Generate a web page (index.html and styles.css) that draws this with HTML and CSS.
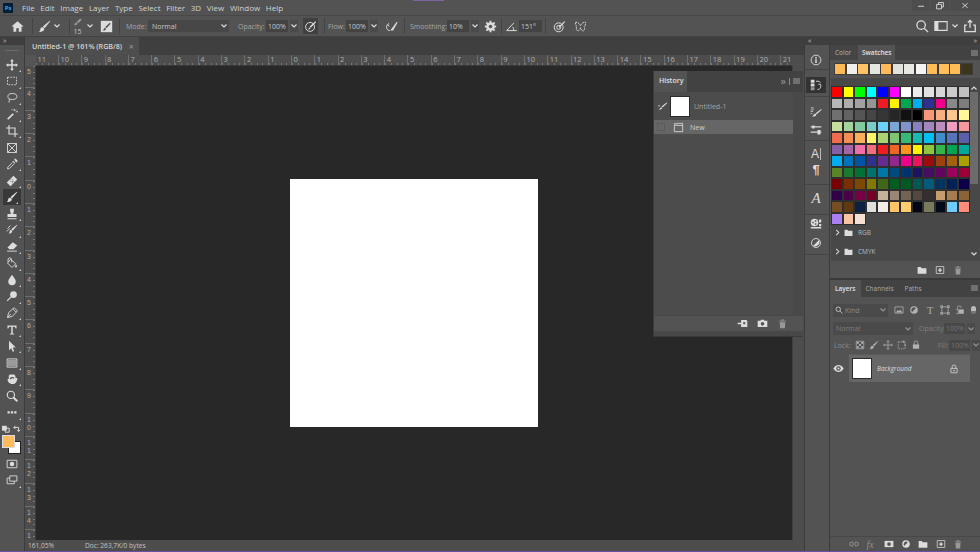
FILE: index.html
```html
<!DOCTYPE html>
<html lang="en">
<head>
  <meta charset="UTF-8" />
  <title>Untitled-1 @ 161% (RGB/8)</title>
  <link rel="stylesheet" href="styles.css">
</head>
<body>

  <!-- shared icons -->
  <svg class="defs" aria-hidden="true">
    <symbol id="i-brush" viewBox="0 0 16 16"><path class="f" d="M14.5 1 15 1.6 8.2 10 6 8ZM5.3 9c1.500 0 2.700 1.200 2.400 2.600C7.300 13.800 4 14.800 1 14.600 2.800 13.600 2.600 12 3 10.800 3.300 9.700 4.200 9 5.300 9Z"/></symbol>
    <symbol id="i-chev" viewBox="0 0 8 8"><path class="s" d="M1.500 2.500 4 5l2.500-2.500"/></symbol>
    <symbol id="i-folder" viewBox="0 0 16 16"><path class="f" d="M1 3h5l1.500 2H15v9H1Z"/></symbol>
    <symbol id="i-new" viewBox="0 0 16 16"><path class="s" d="M2 2.500h12v11H2Z"/><path class="f" d="M7 5h2v2h2v2H9v2H7V9H5V7h2Z"/></symbol>
    <symbol id="i-trash" viewBox="0 0 16 16"><path class="f" d="M3 4h10v1H3ZM6 2h4v1.500H6ZM4 6h8l-.5 9h-7Z"/></symbol>
    <symbol id="i-lock" viewBox="0 0 16 16"><path class="s" d="M5 7V4.500a3 3 0 0 1 6 0V7"/><path class="f" d="M3 7h10v7H3Z"/></symbol>
  </svg>

  <!-- Menu -->
  <header class="menubar">
    <span class="ps-logo">Ps</span>
    <nav class="menu">
      <span>File</span><span>Edit</span><span>Image</span><span>Layer</span><span>Type</span><span>Select</span><span>Filter</span><span>3D</span><span>View</span><span>Window</span><span>Help</span>
    </nav>
    <span class="title-mark"></span>
    <div class="winbtns">
      <svg viewBox="0 0 12 12"><path class="s" d="M2 7h8"/></svg>
      <svg viewBox="0 0 12 12"><path class="s" d="M1.500 4.500h6.500v6H1.500ZM4 4.500V2h6.500v6H8"/></svg>
      <svg viewBox="0 0 12 12"><path class="s" d="M2.500 3l7 6M9.500 3l-7 6"/></svg>
    </div>
  </header>

  <!-- Options -->
  <div class="optbar">
    <svg class="oi home" viewBox="0 0 16 16"><path class="f" d="M8 1.500 15.500 8H13v6.500H9.500V10h-3v4.500H3V8H.5Z"/></svg>
    <i class="sep"></i>
    <svg class="oi brush"><use href="#i-brush"/></svg>
    <svg class="chev"><use href="#i-chev"/></svg>
    <i class="sep sep-b"></i>
    <div class="size">
      <svg viewBox="0 0 16 16"><path class="f dim" d="M12 2l2 2-5 5-2-2ZM6 8c1 0 2 1 1.600 2.200C7 11.800 4.500 12.400 3 12c1-1 .8-3.800 3-4Z"/></svg>
      <span>15</span>
    </div>
    <svg class="chev chev-b"><use href="#i-chev"/></svg>
    <svg class="oi toggle" viewBox="0 0 16 16"><path class="f" d="M1 1h14v14H1Z"/><path class="b" d="M12 3.500 13 4.500 8 10 6.500 8.500ZM6 9.500 7.500 11C7 12.500 5 13 3.500 12.800 4.800 12 4.500 10 6 9.500Z"/></svg>
    <i class="sep sep-c"></i>
    <label class="lbl mode-lbl">Mode:</label>
    <div class="field mode"><span>Normal</span><svg class="chev"><use href="#i-chev"/></svg></div>
    <label class="lbl op-lbl">Opacity:</label>
    <div class="field num op"><span>100%</span></div>
    <div class="field drop"><svg class="chev"><use href="#i-chev"/></svg></div>
    <div class="pressed">
      <svg class="oi" viewBox="0 0 16 16"><circle class="s" cx="7.500" cy="8.500" r="5.500"/><path class="f" d="M14 1.500 15 2.500 8.500 9.500 7 8ZM6.500 9 8 10.500C7.500 11.500 6 11.800 5 11.500 6 11 5.800 9.600 6.500 9Z"/></svg>
    </div>
    <i class="sep sep-d"></i>
    <label class="lbl flow-lbl">Flow:</label>
    <div class="field num flow"><span>100%</span></div>
    <div class="field drop"><svg class="chev"><use href="#i-chev"/></svg></div>
    <svg class="oi air" viewBox="0 0 16 16"><path class="s" d="M5 4.500C3 5 1.500 7 2 9.500 2.300 11.500 4 13 6 13M3.500 6 5 8"/><path class="f" d="M14.500 2 15.500 3 10 13H6.500Z"/></svg>
    <i class="sep sep-e"></i>
    <label class="lbl smooth-lbl">Smoothing:</label>
    <div class="field num smooth"><span>10%</span></div>
    <div class="field drop"><svg class="chev"><use href="#i-chev"/></svg></div>
    <svg class="oi gear" viewBox="0 0 16 16"><path class="f" d="M7 1h2l.4 2 1.300.5L12.400 2.400 13.800 3.800 12.500 5.400 13 6.700 15 7v2l-2 .4-.5 1.300 1.300 1.700-1.400 1.400-1.700-1.300-1.300.5L9 15H7l-.4-2-1.300-.5-1.700 1.300-1.400-1.400 1.300-1.700L3 9.400 1 9V7l2-.3.5-1.300L2.200 3.800 3.600 2.400l1.700 1.100L6.600 3Z"/><circle class="b" cx="8" cy="8" r="2.200"/></svg>
    <i class="sep sep-f"></i>
    <svg class="oi angle" viewBox="0 0 16 16"><path class="s" d="M14.500 13H2L11 3.500M9.500 8.500c1 1.200 1.300 2.900 1.300 4.500"/></svg>
    <div class="field num ang"><span>151°</span></div>
    <i class="sep sep-g"></i>
    <svg class="oi target" viewBox="0 0 16 16"><circle class="s" cx="7" cy="9" r="5.500"/><circle class="s" cx="7" cy="9" r="2.500"/><path class="f" d="M14 1.500 15 2.500 8 9.500 6.800 8.200Z"/></svg>
    <svg class="oi fly" viewBox="0 0 16 16"><path class="s dash" d="M2 2.500c2.500 0 5 2 6 4.500 1-2.500 3.500-4.500 6-4.500 .5 2.500 0 5-1.500 5.500 1 1 1 4-1 5.500-1.500 0-3-1.500-3.500-4-.5 2.500-2 4-3.500 4-2-1.500-2-4.500-1-5.500C2.500 7.500 1.500 5 2 2.500Z"/></svg>
    <div class="opt-right">
      <svg class="oi" viewBox="0 0 16 16"><circle class="s th" cx="7" cy="7" r="4.800"/><path class="s th" d="M10.500 10.500 15 15"/></svg>
      <svg class="oi" viewBox="0 0 16 16"><path class="s" d="M1 3h14v10H1Z"/><path class="f" d="M1 3h4v10H1Z"/></svg>
      <svg class="chev"><use href="#i-chev"/></svg>
      <svg class="oi" viewBox="0 0 16 16"><path class="s th" d="M4.500 7H2v7.500h12V7h-2.500M8 10V1.500M5.500 4 8 1.500 10.500 4"/></svg>
    </div>
  </div>

  <main class="workspace">

    <!-- Tools -->
    <aside class="toolbar">
      <div class="strip"><span class="arrows">»</span></div>
      <div class="grip"></div>
      <div class="tool c"><svg viewBox="0 0 16 16"><path class="f" d="M8 0l2.500 3H9v4h4V5.500L16 8l-3 2.500V9H9v4h1.500L8 16l-2.500-3H7V9H3v1.500L0 8l3-2.500V7h4V3H5.500Z"/></svg></div>
      <div class="tool c"><svg viewBox="0 0 16 16"><path class="s dash2" d="M2 3h12v10H2Z"/></svg></div>
      <div class="tool c"><svg viewBox="0 0 16 16"><ellipse class="s" cx="8.500" cy="6" rx="6" ry="4"/><path class="s" d="M4.500 9.500C4 11 4.500 12 4 14"/></svg></div>
      <div class="tool c"><svg viewBox="0 0 16 16"><path class="f" d="M9 7l1.500 1.500L3 15.500 1.500 14Z"/><path class="s" d="M11 1v3M13 5h3M9 3 7.500 1.500M13.500 2l-1.500 1.500"/></svg></div>
      <div class="tool c"><svg viewBox="0 0 16 16"><path class="s th" d="M4 0v12h12M0 4h12v12"/></svg></div>
      <div class="tool"><svg viewBox="0 0 16 16"><path class="s" d="M2 2h12v12H2ZM2 2l12 12M14 2 2 14"/></svg></div>
      <div class="tool c"><svg viewBox="0 0 16 16"><path class="f" d="M11 1c1-1 3 1 4 2s0 2-1 3l-2-2ZM9.500 3.500l3 3-1 1-3-3Z"/><path class="s" d="M8.500 6 2.500 12 2 14.500 4.500 14l6-6"/></svg></div>
      <div class="tool c"><svg viewBox="0 0 16 16"><path class="f" d="M10 1 15 6 6 15 1 10Z"/><path class="b" d="M6 6h1v1H6ZM8 6h1v1H8ZM6 8h1v1H6ZM8 8h1v1H8ZM10 8h1v1h-1ZM8 10h1v1H8Z"/></svg></div>
      <div class="tool c active"><svg><use href="#i-brush"/></svg></div>
      <div class="tool c"><svg viewBox="0 0 16 16"><path class="f" d="M5.500 1h5v2.500L9.500 8H14v4H2V8h4.500L5.500 3.500ZM2 13.500h12V15H2Z"/></svg></div>
      <div class="tool c"><svg viewBox="0 0 16 16"><path class="f" d="M14.500 1 15 1.600 9 9 7 7ZM6 8c1.500 0 2.500 1 2.200 2.400C7.800 12 5.500 13 3.500 13 5 12 4.700 8.400 6 8Z"/><path class="s" d="M2 6 6 2M1 10l4-4"/></svg></div>
      <div class="tool c"><svg viewBox="0 0 16 16"><path class="f" d="M9 1.500 15 6 10 11H4.500L2 8.500Z"/><path class="s" d="M1.500 13.500h13"/></svg></div>
      <div class="tool c"><svg viewBox="0 0 16 16"><path class="s" d="M6 3 13 9 8 14 2 8ZM3 7C2 3 3 1 5 1c2 0 2.500 2 2.500 6"/><path class="f" d="M13.500 10c1 1.500 1.500 2.400 1 3.400-.6.800-2 .8-2.400-.2-.2-1 .8-2.100 1.400-3.200Z"/></svg></div>
      <div class="tool c"><svg viewBox="0 0 16 16"><path class="f" d="M8 1c2 3 5 6 5 9a5 5 0 0 1-10 0c0-3 3-6 5-9Z"/></svg></div>
      <div class="tool c"><svg viewBox="0 0 16 16"><circle class="f" cx="10" cy="6" r="4.500"/><path class="s th" d="M7 9 1.500 14.500"/></svg></div>
      <div class="tool c"><svg viewBox="0 0 16 16"><path class="s" d="M2 14 3.500 7.500 9 2.500 13.500 7 8.500 12.500ZM2 14 6.500 9.500M9 2.500 11 1l4 4-1.500 2"/></svg></div>
      <div class="tool c"><svg viewBox="0 0 16 16"><path class="f" d="M2 2h12v4h-1.200C12.500 4.200 12 3.500 10 3.500H9V12.500l2 .5V14H5v-1l2-.5V3.500H6C4 3.500 3.500 4.200 3.200 6H2Z"/></svg></div>
      <div class="tool c"><svg viewBox="0 0 16 16"><path class="f" d="M4 1 13 10 9 10 11 15 9 15.500 7 11 4 13.500Z"/></svg></div>
      <div class="tool c"><svg viewBox="0 0 16 16"><path class="s" d="M1.500 2.500h13v11h-13Z"/><path class="f dim" d="M2.500 3.500h11v9h-11Z"/></svg></div>
      <div class="tool c"><svg viewBox="0 0 16 16"><path class="f" d="M4 7C3 4 4 2 6 2h4c2 0 3 2 2.500 4L15 7c.5 2-1 6-4 7.500H7C4 14 2 11 2 9Z"/><path class="b" d="M5 7.500c1.500-2.500 5-2.500 6.500-1l-1 1c-1-.8-3-.8-4 1Z"/></svg></div>
      <div class="tool"><svg viewBox="0 0 16 16"><circle class="s th" cx="6.500" cy="6.500" r="4.800"/><path class="s thick" d="M10 10 15 15"/></svg></div>
      <div class="tool c"><svg viewBox="0 0 16 16"><path class="f" d="M2 7h3v3H2ZM6.500 7h3v3h-3ZM11 7h3v3h-3Z"/></svg></div>

      <div class="colors">
        <div class="color-swap">
          <svg viewBox="0 0 10 10"><path class="f" d="M0 1h6v6H0Z"/><path class="s" d="M4 4h5v5H4Z"/></svg>
          <svg viewBox="0 0 10 10"><path class="s" d="M1 3h6v5M5 6l2 2 2-2M3 1 1 3l2 2"/></svg>
        </div>
        <div class="chips"><span class="chip bg"></span><span class="chip fg"></span></div>
      </div>
      <div class="tool mask"><svg viewBox="0 0 16 16"><path class="s" d="M1.500 3h13v10h-13Z"/><circle class="f" cx="8" cy="8" r="3"/></svg></div>
      <div class="tool c screen"><svg viewBox="0 0 16 16"><path class="s" d="M5 2.500h9.500v7H5ZM5 5.500H1.500v7.500H11V9.500"/></svg></div>
    </aside>

    <!-- Document -->
    <section class="doc">
      <div class="tabs">
        <div class="tab"><span>Untitled-1 @ 161% (RGB/8)</span><em>×</em></div>
      </div>
      <div class="docbody">
        <div class="corner"></div>
        <div class="hruler">
          <span class="first">11</span><span>10</span><span>9</span><span>8</span><span>7</span><span>6</span><span>5</span><span>4</span><span>3</span><span>2</span><span>1</span><span>0</span><span>1</span><span>2</span><span>3</span><span>4</span><span>5</span><span>6</span><span>7</span><span>8</span><span>9</span><span>10</span><span>11</span><span>12</span><span>13</span><span>14</span><span>15</span><span>16</span><span>17</span><span>18</span><span>19</span><span>20</span><span>21</span>
        </div>
        <div class="scroll-corner"></div>
        <div class="vruler">
          <span class="first">5</span><span>4</span><span>3</span><span>2</span><span>1</span><span>0</span><span>1</span><span>2</span><span>3</span><span>4</span><span>5</span><span>6</span><span>7</span><span>8</span><span>9</span><span>1<br>0</span><span>1<br>1</span><span>1<br>2</span><span>1<br>3</span><span>1<br>4</span><span>1</span>
        </div>
        <div class="canvas-wrap"><div class="canvas"></div></div>
        <div class="vscroll"></div>
      </div>
      <footer class="status">
        <span class="zoom-val">161,05%</span>
        <span class="doc-size">Doc: 263,7K/0 bytes</span>
      </footer>

      <!-- floating History panel -->
      <div class="history">
        <div class="ptabs">
          <span class="ptab on">History</span>
          <span class="hist-tools"><b>»</b><i></i><svg class="pmenu" viewBox="0 0 8 6"><path class="f" d="M0 0h8v1.200H0ZM0 2.300h8v1.200H0ZM0 4.600h8v1.200H0Z"/></svg></span>
        </div>
        <div class="hist-main">
          <div class="hist-list">
            <div class="hist-row snap">
              <svg viewBox="0 0 16 16"><path class="f" d="M14 2 15 3 8 9.500 6.500 8ZM6 9 7.500 10.500C7 12 4.500 13 2.500 12.500 4 12 4.500 9.500 6 9Z"/><path class="f" d="M1.500 6.500h3v1.200h-3Z"/></svg>
              <span class="thumb"></span><span>Untitled-1</span>
            </div>
            <div class="hist-row cur">
              <span class="check"></span>
              <svg viewBox="0 0 16 16"><path class="s" d="M2 2h12v12H2ZM2 5h12"/><path class="f dim" d="M2 2h5v3H2Z"/></svg>
              <span>New</span>
            </div>
          </div>
          <div class="hist-scroll"></div>
        </div>
        <div class="pfoot">
          <svg viewBox="0 0 16 16"><path class="f" d="M7 3h7l1 2v8H6V9H1V7h5V3Z"/><path class="b" d="M9 6h3v3H9Z"/></svg>
          <svg viewBox="0 0 16 16"><path class="f" d="M1 4h4l1-1.500h4L11 4h4v9H1Z"/><circle class="b" cx="8" cy="8.500" r="2.600"/></svg>
          <svg class="dim-ic"><use href="#i-trash"/></svg>
        </div>
        <div class="hist-grip"></div>
      </div>
    </section>

    <!-- Collapsed panels -->
    <aside class="dock">
      <div class="strip"><span class="arrows">«</span></div>
      <div class="dgroup g1">
        <svg viewBox="0 0 16 16"><circle class="s" cx="8" cy="8" r="6.500"/><path class="f" d="M7 7h2v5H7ZM7 4h2v2H7Z"/></svg>
      </div>
      <div class="dgroup g2">
        <div class="dsel"><svg viewBox="0 0 16 16"><path class="f" d="M1 1h5v4H1ZM1 6h5v4H1Z"/><path class="f dim" d="M1 11h5v4H1Z"/><path class="s" d="M8 3h4l2 2M11 7h3c1 3 0 7-4 7"/></svg></div>
      </div>
      <div class="dgroup g3">
        <svg class="br" viewBox="0 0 16 16"><path class="f" d="M1 2h4v1H1ZM1 4.500h4v1H1ZM1 7h3v1H1ZM1 9.500h2v1H1Z"/><path class="f" d="M15 4 15.500 5 9 11 7.500 9.500ZM7 10 8.500 11.500C8 13.500 5 14.500 2.500 14 4.500 13.500 5 10.500 7 10Z"/></svg>
        <svg viewBox="0 0 16 16"><path class="f" d="M1 3h14v1.500H1ZM1 10h14v1.500H1Z"/><path class="f" d="M3 2h3v4H3ZM10 8h4v6h-4Z"/></svg>
      </div>
      <div class="dgroup g4">
        <div class="a-cur"><span>A</span><i></i></div>
        <div class="para">¶</div>
      </div>
      <div class="dgroup g5">
        <div class="a-script">A</div>
      </div>
      <div class="dgroup g6">
        <svg viewBox="0 0 16 16"><circle class="f" cx="6" cy="6" r="5"/><path class="b" d="M3 5h2v2H3ZM6.500 3h2v2h-2ZM6.500 7h2v2h-2Z"/><path class="f" d="M12 2h3v4h-3ZM12 8h3v3h-3ZM1 12h14v2H1Z"/></svg>
        <svg viewBox="0 0 16 16"><circle class="s" cx="8" cy="8" r="6"/><path class="f" d="M12 4a6 6 0 0 1-8 8Z"/></svg>
      </div>
    </aside>

    <!-- Right panels -->
    <aside class="panels">
      <div class="strip strip-r"><span class="arrows">»</span></div>

      <section class="swatches">
        <div class="ptabs">
          <span class="ptab">Color</span><span class="ptab on">Swatches</span>
          <svg class="pmenu" viewBox="0 0 8 6"><path class="f" d="M0 0h8v1.200H0ZM0 2.300h8v1.200H0ZM0 4.600h8v1.200H0Z"/></svg>
        </div>
        <div class="recent">
          <i style="background:#ffba57"></i><i style="background:#f0efea"></i><i style="background:#ffc266"></i><i style="background:#e6e6e0"></i><i style="background:#ffb95a"></i><i style="background:#e3e3de"></i><i style="background:#e9e9e4"></i><i style="background:#f7f5f2"></i><i style="background:#ffbc57"></i><i style="background:#ffbf5a"></i><i style="background:#ffbd58"></i><i style="background:#3b351a"></i>
        </div>
        <div class="sw-main">
          <div class="sw-left">
            <div class="grid">
              <i style="background:#ff0000"></i><i style="background:#ffff00"></i><i style="background:#00ff00"></i><i style="background:#00ffff"></i><i style="background:#0000ff"></i><i style="background:#ff00ff"></i><i style="background:#ffffff"></i><i style="background:#ebebeb"></i><i style="background:#e1e1e1"></i><i style="background:#d7d7d7"></i><i style="background:#cbcbcb"></i><i style="background:#c0c0c0"></i>
              <i style="background:#b7b7b7"></i><i style="background:#adadad"></i><i style="background:#a1a1a1"></i><i style="background:#959595"></i><i style="background:#ed1c24"></i><i style="background:#fff200"></i><i style="background:#00a651"></i><i style="background:#00aeef"></i><i style="background:#2e3192"></i><i style="background:#ec008c"></i><i style="background:#898989"></i><i style="background:#7d7d7d"></i>
              <i style="background:#707070"></i><i style="background:#626262"></i><i style="background:#555555"></i><i style="background:#464646"></i><i style="background:#363636"></i><i style="background:#262626"></i><i style="background:#111111"></i><i style="background:#000000"></i><i style="background:#f7977a"></i><i style="background:#fbad82"></i><i style="background:#fdc68c"></i><i style="background:#fff799"></i>
              <i style="background:#c6df9c"></i><i style="background:#a4d49d"></i><i style="background:#81ca9d"></i><i style="background:#7bcdc9"></i><i style="background:#6ccff7"></i><i style="background:#7ca6d8"></i><i style="background:#8293ca"></i><i style="background:#8881be"></i><i style="background:#a286bd"></i><i style="background:#bc8cbf"></i><i style="background:#f49bc1"></i><i style="background:#f5999d"></i>
              <i style="background:#f16c4d"></i><i style="background:#f68e54"></i><i style="background:#fbaf5a"></i><i style="background:#fff467"></i><i style="background:#acd372"></i><i style="background:#7dc473"></i><i style="background:#39b778"></i><i style="background:#16bcb4"></i><i style="background:#00bff3"></i><i style="background:#438ccb"></i><i style="background:#5574b9"></i><i style="background:#5c5fa9"></i>
              <i style="background:#8560a8"></i><i style="background:#a864a8"></i><i style="background:#f06eaa"></i><i style="background:#f26d7d"></i><i style="background:#ee1d24"></i><i style="background:#f16522"></i><i style="background:#f7941d"></i><i style="background:#fff100"></i><i style="background:#8fc63d"></i><i style="background:#37b44a"></i><i style="background:#00a650"></i><i style="background:#00a99e"></i>
              <i style="background:#00aeef"></i><i style="background:#0072bc"></i><i style="background:#0054a5"></i><i style="background:#2f3192"></i><i style="background:#652c91"></i><i style="background:#91278f"></i><i style="background:#ec008c"></i><i style="background:#ed145b"></i><i style="background:#9e0b0f"></i><i style="background:#a0410d"></i><i style="background:#a36209"></i><i style="background:#aba000"></i>
              <i style="background:#598527"></i><i style="background:#1a7b30"></i><i style="background:#007236"></i><i style="background:#00746b"></i><i style="background:#0076a4"></i><i style="background:#004a80"></i><i style="background:#003370"></i><i style="background:#1d1363"></i><i style="background:#450e61"></i><i style="background:#62055f"></i><i style="background:#9e005c"></i><i style="background:#9d0039"></i>
              <i style="background:#790000"></i><i style="background:#7b2e00"></i><i style="background:#7d4900"></i><i style="background:#827a00"></i><i style="background:#406618"></i><i style="background:#005e20"></i><i style="background:#005825"></i><i style="background:#005951"></i><i style="background:#005b7e"></i><i style="background:#003562"></i><i style="background:#002156"></i><i style="background:#0c004b"></i>
              <i style="background:#30004a"></i><i style="background:#4b0048"></i><i style="background:#7a0045"></i><i style="background:#7a0026"></i><i style="background:#c7b299"></i><i style="background:#998675"></i><i style="background:#736357"></i><i style="background:#534741"></i><i style="background:#362f2d"></i><i style="background:#c69c6d"></i><i style="background:#a77c50"></i><i style="background:#8c6239"></i>
              <i style="background:#754c24"></i><i style="background:#603913"></i><i style="background:#0e2040"></i><i style="background:#e0e0dc"></i><i style="background:#f0ece6"></i><i style="background:#ffc566"></i><i style="background:#ffcd6e"></i><i style="background:#020617"></i><i style="background:#7a7a5c"></i><i style="background:#030a1a"></i><i style="background:#6ecbff"></i><i style="background:#ff8c78"></i>
              <i style="background:#a97ff2"></i><i style="background:#f9c4a4"></i><i style="background:#f6e0d2"></i>
            </div>
            <div class="sw-group"><svg class="gchev" viewBox="0 0 8 8"><path class="s" d="M2.500 1 5.500 4l-3 3"/></svg><svg class="gfold"><use href="#i-folder"/></svg><span>RGB</span></div>
            <div class="sw-group"><svg class="gchev" viewBox="0 0 8 8"><path class="s" d="M2.500 1 5.500 4l-3 3"/></svg><svg class="gfold"><use href="#i-folder"/></svg><span>CMYK</span></div>
          </div>
          <div class="sw-scroll">
            <svg class="chev up"><use href="#i-chev"/></svg>
            <div class="thumb-bar"></div>
            <svg class="chev"><use href="#i-chev"/></svg>
          </div>
        </div>
        <div class="sw-foot">
          <svg><use href="#i-folder"/></svg>
          <svg><use href="#i-new"/></svg>
          <svg class="dim-ic"><use href="#i-trash"/></svg>
        </div>
      </section>

      <section class="layers">
        <div class="ptabs">
          <span class="ptab on">Layers</span><span class="ptab">Channels</span><span class="ptab">Paths</span>
          <svg class="pmenu" viewBox="0 0 8 6"><path class="f" d="M0 0h8v1.200H0ZM0 2.300h8v1.200H0ZM0 4.600h8v1.200H0Z"/></svg>
        </div>
        <div class="lrow filter">
          <div class="lfield kind">
            <svg class="small" viewBox="0 0 16 16"><circle class="s th" cx="6.500" cy="6.500" r="4.500"/><path class="s th" d="M10 10l5 5"/></svg>
            <span>Kind</span><svg class="chev"><use href="#i-chev"/></svg>
          </div>
          <svg class="lic" viewBox="0 0 16 16"><path class="s" d="M1.500 3h13v10h-13Z"/><path class="f" d="M3 12l3-4 2 2 2-3 3 5Z"/></svg>
          <svg class="lic" viewBox="0 0 16 16"><circle class="f" cx="8" cy="8" r="6"/><path class="b" d="M5 11a4 4 0 0 1 6-6Z"/></svg>
          <span class="lic t">T</span>
          <svg class="lic" viewBox="0 0 16 16"><path class="s" d="M3 3h10v10H3ZM1 1h3v3H1ZM12 1h3v3h-3ZM1 12h3v3H1ZM12 12h3v3h-3Z"/></svg>
          <svg class="lic" viewBox="0 0 16 16"><path class="s" d="M4 6V4.500a3 3 0 0 1 6 0"/><path class="f" d="M6 7h8v7H6Z"/><path class="s" d="M2 7h3v7H2"/></svg>
          <span class="lswitch"></span>
        </div>
        <div class="lrow blend">
          <div class="lfield normal"><span>Normal</span><svg class="chev"><use href="#i-chev"/></svg></div>
          <label>Opacity:</label>
          <div class="lfield pct"><span>100%</span></div>
          <div class="lfield pdrop"><svg class="chev"><use href="#i-chev"/></svg></div>
        </div>
        <div class="lrow lockrow">
          <label class="locklbl">Lock:</label>
          <svg class="lic" viewBox="0 0 16 16"><path class="s" d="M2 2h12v12H2Z"/><path class="f" d="M3 3h3v3H3ZM10 3h3v3h-3ZM6.500 6.500h3v3h-3ZM3 10h3v3H3ZM10 10h3v3h-3Z"/></svg>
          <svg class="lic"><use href="#i-brush"/></svg>
          <svg class="lic" viewBox="0 0 16 16"><path class="s" d="M8 1v14M1 8h14M6 3l2-2 2 2M6 13l2 2 2-2M3 6 1 8l2 2M13 6l2 2-2 2"/></svg>
          <svg class="lic" viewBox="0 0 16 16"><path class="s dash2" d="M2 3h11v11H2Z"/><path class="f" d="M9 1h3v3H9ZM12 5l3 5-3-1Z"/></svg>
          <svg class="lic"><use href="#i-lock"/></svg>
          <label class="fill">Fill:</label>
          <div class="lfield pct"><span>100%</span></div>
          <div class="lfield pdrop"><svg class="chev"><use href="#i-chev"/></svg></div>
        </div>
        <div class="lrow layer-row">
          <svg class="eye" viewBox="0 0 16 16"><path class="f" d="M.5 8C3 4 5.500 3 8 3s5 1 7.500 5C13 12 10.500 13 8 13S3 12 .5 8Z"/><circle class="b" cx="8" cy="8" r="3.200"/><circle class="f" cx="8" cy="8" r="1.500"/></svg>
          <div class="layer-item">
            <span class="thumb"></span>
            <span class="lname">Background</span>
            <svg class="llock" viewBox="0 0 16 16"><path class="s" d="M5 7V4.500a3 3 0 0 1 6 0V7M3 7h10v7H3Z"/><path class="f" d="M7 9.500h2v2H7Z"/></svg>
          </div>
        </div>
        <div class="layer-foot">
          <svg class="dim-ic" viewBox="0 0 16 16"><path class="s th" d="M7 5H4a3 3 0 0 0 0 6h3M9 5h3a3 3 0 0 1 0 6H9M5 8h6"/></svg>
          <span class="fx">fx</span>
          <svg viewBox="0 0 16 16"><path class="f" d="M1 3h14v10H1Z"/><circle class="b" cx="8" cy="8" r="3"/></svg>
          <svg viewBox="0 0 16 16"><circle class="f" cx="8" cy="8" r="6"/><path class="b" d="M5 11a4.300 4.300 0 0 1 6-6Z"/></svg>
          <svg><use href="#i-folder"/></svg>
          <svg><use href="#i-new"/></svg>
          <svg class="dim-ic"><use href="#i-trash"/></svg>
        </div>
      </section>
    </aside>
  </main>

  <div class="purple-line"></div>
</body>
</html>
```

FILE: styles.css
```css
* {
  box-sizing: border-box;
}

html, body {
  margin: 0;
  padding: 0;
  width: 980px;
  height: 552px;
  overflow: hidden;
}

body {
  display: flex;
  flex-direction: column;
  background: #535353;
  font-family: 'Open Sans', 'Liberation Sans', sans-serif;
  font-size: 7px;
  color: #c4c4c4;
}

.defs {
  position: absolute;
  width: 0;
  height: 0;
}

/* svg paint classes */
.f { fill: #dcdcdc; stroke: none; }
.s { fill: none; stroke: #dcdcdc; stroke-width: 1.2; }
.b { fill: #535353; stroke: none; }
.th { stroke-width: 1.5; }
.thick { stroke-width: 2.6; }
.dim { fill: #9a9a9a; }
.dash { stroke-dasharray: 2 1; }
.dash2 { stroke-dasharray: 2.2 1.6; }

.chev {
  width: 8px;
  height: 8px;
  flex: none;
}

.chev .s, .chev path {
  stroke: #a8a8a8;
}

.sep {
  width: 1px;
  height: 16px;
  background: #444;
  flex: none;
}

/* ---- menu ---- */
.menubar {
  height: 15px;
  flex: none;
  display: flex;
  align-items: center;
  position: relative;
  padding-left: 3px;
  background: #535353;
}

.ps-logo {
  width: 10px;
  height: 10px;
  background: #001e36;
  color: #31a8ff;
  font-size: 6px;
  font-weight: 700;
  line-height: 10px;
  text-align: center;
  border-radius: 1px;
}

.menu {
  display: flex;
  gap: 5.700px;
  margin-left: 9px;
  font-size: 8px;
  color: #d2d2d2;
}

.title-mark {
  position: absolute;
  left: 413px;
  top: 0;
  width: 31px;
  height: 1px;
  background: #7d64a0;
}

.winbtns {
  margin-left: auto;
  display: flex;
  height: 12px;
  align-self: flex-start;
}

.winbtns svg {
  width: 18px;
  height: 11px;
  padding: 1px 3px;
  background: #4d4d4d;
  margin-left: 1px;
}

.winbtns svg:last-child {
  width: 30px;
  padding: 1px 9px;
}

/* ---- options ---- */
.optbar {
  height: 22px;
  flex: none;
  display: flex;
  align-items: center;
  padding-left: 11px;
  background: #535353;
  border-top: 1px solid #484848;
  border-bottom: 1px solid #424242;
}

.oi {
  width: 13px;
  height: 13px;
  flex: none;
}

.sep {
  margin-left: 8px;
}

.brush { margin-left: 5px; }
.optbar .chev { margin-left: 2px; }

.size {
  margin-left: 1px;
  width: 13px;
  display: flex;
  flex-direction: column;
  align-items: center;
  font-size: 7px;
  line-height: 7px;
}

.size svg {
  width: 11px;
  height: 11px;
}

.chev-b { margin-left: 0; }
.toggle { margin-left: 6px; }
.sep-c { margin-left: 6px; }

.lbl {
  color: #a6a6a6;
  font-size: 7px;
  flex: none;
}

.mode-lbl { margin-left: 6px; width: 22px; }

.field {
  height: 12px;
  background: #474747;
  display: flex;
  align-items: center;
  font-size: 7px;
  color: #c8c8c8;
  flex: none;
}

.mode {
  width: 81px;
  margin-left: 0;
  padding: 0 1px 0 4px;
  justify-content: space-between;
  border-radius: 1px;
}

.op-lbl { margin-left: 9px; width: 28px; }
.num { padding-left: 2px; background: #434343; }
.op { width: 22px; }
.flow { width: 22px; }
.smooth { width: 22px; }
.ang { width: 23px; margin-left: 1px; }

.field.drop {
  width: 8px;
  margin-left: 2px;
  background: #4a4a4a;
}

.field.drop .chev { margin-left: 0; }

.pressed {
  width: 15px;
  height: 16px;
  margin-left: 5px;
  background: #404040;
  display: flex;
  align-items: center;
  justify-content: center;
  flex: none;
}

.sep-d { margin-left: 6px; }
.flow-lbl { margin-left: 3px; width: 18px; }
.air { margin-left: 7px; }
.sep-e { margin-left: 6px; }
.smooth-lbl { margin-left: 5px; width: 37px; }
.gear { margin-left: 5px; }
.sep-f { margin-left: 4px; }
.angle { margin-left: 3px; }
.sep-g { margin-left: 3px; }
.target { margin-left: 7px; }
.fly { margin-left: 8px; }

.opt-right {
  margin-left: auto;
  display: flex;
  align-items: center;
  gap: 5px;
  padding-right: 3px;
}

.opt-right .oi { width: 14px; height: 14px; }
.opt-right .chev { margin: 0 -1px 0 -2px; }

/* ---- layout ---- */
.workspace {
  flex: 1;
  min-height: 0;
  display: flex;
}

.strip {
  height: 8px;
  background: #3f3f3f;
  line-height: 7px;
  font-size: 7px;
  color: #bbb;
  padding-left: 3px;
}

.strip .arrows {
  display: block;
  height: 8px;
}

.strip-r {
  text-align: right;
  padding-right: 3px;
}

.grip {
  height: 9.500px;
  margin: 2px 5px 0;
  background: linear-gradient(#535353 3px, #6a6a6a 3px, #6a6a6a 4px, #535353 4px);
}

/* ---- tools ---- */
.toolbar {
  width: 25px;
  flex: none;
  background: #535353;
  display: flex;
  flex-direction: column;
  border-right: 1px solid #3c3c3c;
}

.tool {
  height: 16.55px;
  flex: none;
  display: flex;
  align-items: center;
  justify-content: center;
  position: relative;
}

.tool svg {
  width: 12px;
  height: 12px;
}

.tool.c::after {
  content: "";
  position: absolute;
  right: 3px;
  bottom: 1px;
  border-left: 2px solid transparent;
  border-bottom: 2px solid #ccc;
}

.tool.active {
  background: #383838;
  margin: 0 3px;
}

.colors {
  margin-top: 4px;
  height: 31px;
  flex: none;
}

.color-swap {
  height: 10px;
  display: flex;
  gap: 3px;
  padding-left: 2px;
}

.color-swap svg {
  width: 8px;
  height: 8px;
}

.chips {
  position: relative;
  height: 21px;
}

.chip {
  position: absolute;
  width: 13px;
  height: 13px;
  border: 1px solid #222;
}

.chip.fg {
  left: 2px;
  top: 0;
  background: #ffbb5c;
  border-color: #ddd;
}

.chip.bg {
  left: 8px;
  top: 6px;
  background: #fff;
}

/* ---- document ---- */
.doc {
  flex: 1;
  min-width: 0;
  display: flex;
  flex-direction: column;
  position: relative;
}

.tabs {
  height: 18px;
  flex: none;
  background: #3f3f3f;
  display: flex;
}

.tab {
  width: 114px;
  background: #4e4e4e;
  display: flex;
  align-items: center;
  justify-content: space-between;
  padding: 0 5px 0 7px;
  font-size: 7.100px;
  font-weight: 600;
  color: #d6d6d6;
  white-space: nowrap;
}

.tab em {
  font-style: normal;
  color: #999;
  font-size: 9px;
  font-weight: 400;
}

.docbody {
  flex: 1;
  min-height: 0;
  display: grid;
  grid-template-columns: 11px minmax(0, 1fr) 12px;
  grid-template-rows: 11px minmax(0, 1fr);
}

.corner { background: #555; }

.hruler {
  display: flex;
  overflow: hidden;
  background: #4d4d4d;
  border-bottom: 1px solid #3a3a3a;
}

.hruler span {
  width: 23.3px;
  flex: none;
  padding-left: 1.500px;
  font-size: 7.5px;
  line-height: 9px;
  color: #aeaeae;
  border-left: 1px solid #6e6e6e;
  background: repeating-linear-gradient(90deg, #777 0 1px, transparent 1px 5.800px) bottom left / 100% 2px no-repeat;
}

.hruler span.first {
  width: 22px;
  border-left: none;
}

.scroll-corner { background: #4d4d4d; }

.vruler {
  display: flex;
  flex-direction: column;
  overflow: hidden;
  background: #4d4d4d;
  border-right: 1px solid #3a3a3a;
}

.vruler span {
  height: 23.3px;
  flex: none;
  padding: 2px 0 0 2px;
  font-family: 'Liberation Sans', sans-serif;
  font-size: 7px;
  line-height: 8.200px;
  color: #aeaeae;
  border-top: 1px solid #6e6e6e;
  background: repeating-linear-gradient(180deg, #777 0 1px, transparent 1px 5.800px) top right / 2px 100% no-repeat;
}

.vruler span.first {
  height: 20.500px;
  border-top: none;
}

.canvas-wrap {
  background: #282828;
  display: flex;
  align-items: center;
  justify-content: center;
  min-height: 0;
}

.canvas {
  width: 248px;
  height: 248px;
  background: #fff;
}

.vscroll {
  background: #4d4d4d;
  border-left: 1px solid #3f3f3f;
}

.status {
  height: 11px;
  flex: none;
  background: #4d4d4d;
  display: flex;
  align-items: center;
  font-size: 6.600px;
  color: #c2c2c2;
}

.zoom-val {
  width: 29px;
  margin-left: 3px;
}

.doc-size {
  margin-left: 28px;
}

/* ---- panel shared ---- */
.ptabs {
  height: 15px;
  flex: none;
  display: flex;
  align-items: stretch;
  background: #424242;
  position: relative;
}

.ptab {
  padding: 0 4px;
  font-size: 6.500px;
  line-height: 15px;
  color: #b4b4b4;
}

.ptab.on {
  background: #535353;
  color: #e0e0e0;
  font-weight: 600;
}

.pmenu {
  position: absolute;
  right: 2px;
  top: 5px;
  width: 7px;
  height: 6px;
}

.pmenu .f { fill: #9c9c9c; }

.thumb {
  display: block;
  width: 20px;
  height: 21px;
  flex: none;
  background: #fff;
  border: 1px solid #2c2c2c;
}

.dim-ic { opacity: .5; }

/* ---- history ---- */
.history {
  position: absolute;
  left: 628px;
  top: 34px;
  width: 150px;
  height: 266px;
  background: #535353;
  display: flex;
  flex-direction: column;
  border: 1px solid #3a3a3a;
  border-top: none;
  border-right: none;
}

.history .ptabs {
  height: 21px;
}

.history .ptab {
  width: 33px;
  line-height: 19px;
  padding: 0 0 0 5px;
  font-size: 7px;
}

.hist-tools {
  position: absolute;
  right: 3px;
  top: 4px;
  display: flex;
  align-items: center;
  gap: 3px;
  color: #999;
  font-size: 11px;
  line-height: 12px;
}

.hist-tools b { font-weight: 400; }

.hist-tools i {
  width: 1px;
  height: 7px;
  background: #8a8a8a;
}

.hist-tools .pmenu {
  position: static;
}

.hist-main {
  flex: 1;
  min-height: 0;
  display: flex;
}

.hist-list {
  flex: 1;
  background: #4c4c4c;
  padding-top: 1px;
}

.hist-scroll {
  width: 10px;
  background: #494949;
}

.hist-row {
  display: flex;
  align-items: center;
  font-size: 7px;
  color: #a2a2a2;
}

.snap {
  height: 27px;
  padding-left: 3px;
}

.snap svg {
  width: 11px;
  height: 11px;
  margin-right: 2px;
}

.snap .thumb {
  margin-right: 4px;
}

.cur {
  height: 14px;
  background: #666;
  color: #d0d0d0;
  padding-left: 3px;
}

.check {
  width: 8px;
  height: 8px;
  border: 1px solid #5b5b5b;
  margin-right: 8px;
}

.cur svg {
  width: 11px;
  height: 11px;
  margin-right: 6px;
}

.pfoot {
  height: 16px;
  flex: none;
  background: #535353;
  border-top: 1px solid #474747;
  display: flex;
  align-items: center;
  justify-content: flex-end;
  gap: 9px;
  padding-right: 15px;
}

.pfoot svg {
  width: 11px;
  height: 11px;
}

.hist-grip {
  height: 5px;
  flex: none;
  background: #484848;
}

/* ---- dock ---- */
.dock {
  width: 26px;
  flex: none;
  display: flex;
  flex-direction: column;
  background: #535353;
  border-left: 1px solid #3c3c3c;
  border-right: 1px solid #3c3c3c;
}

.dgroup {
  display: flex;
  flex-direction: column;
  align-items: center;
  border-bottom: 1px solid #444;
  padding-top: 9px;
  padding-right: 2px;
  flex: none;
}

.dgroup svg {
  width: 12px;
  height: 12px;
  flex: none;
}

.g1 { height: 24px; margin-top: 1px; padding-top: 8px; }
.g2 { height: 27px; padding-top: 7px; }
.g3 { height: 44px; padding-top: 9px; gap: 6px; }
.g4 { height: 44px; padding-top: 6px; gap: 0; }
.g5 { height: 30px; padding-top: 4px; }
.g6 { height: 40px; padding-top: 3px; gap: 7px; }

.dsel {
  width: 20px;
  height: 16px;
  background: #333;
  display: flex;
  align-items: center;
  justify-content: center;
}

.a-cur {
  display: flex;
  align-items: center;
  font-size: 12px;
  line-height: 14px;
  font-family: 'Liberation Sans', sans-serif;
  color: #ddd;
}

.a-cur i {
  width: 1px;
  height: 12px;
  background: #bbb;
  margin-left: 1px;
}

.para {
  font-size: 13px;
  line-height: 17px;
  font-family: 'Liberation Sans', sans-serif;
  font-weight: 700;
  color: #ddd;
}

.a-script {
  font-size: 15px;
  line-height: 18px;
  font-family: 'Liberation Serif', serif;
  font-style: italic;
  color: #ddd;
}

/* ---- right panels ---- */
.panels {
  width: 150px;
  flex: none;
  display: flex;
  flex-direction: column;
  background: #535353;
}

.swatches {
  height: 235px;
  flex: none;
  display: flex;
  flex-direction: column;
  border-bottom: 2px solid #3a3a3a;
}

.swatches .ptab {
  line-height: 15px;
}

.swatches .ptab:first-child {
  width: 28px;
  padding-left: 5px;
  background: #454545;
}

.swatches .ptab.on {
  padding: 0 4px 0 4px;
  width: 37px;
}

.recent {
  height: 18px;
  flex: none;
  display: flex;
  gap: 1.500px;
  padding: 4px 0 0 5px;
}

.recent i {
  width: 10px;
  height: 10px;
  flex: none;
  outline: 1px solid #3d3d3d;
}

.sw-main {
  flex: 1;
  min-height: 0;
  display: flex;
  background: #484848;
  margin-left: 1px;
}

.sw-left {
  flex: 1;
  min-width: 0;
  padding-top: 8px;
}

.grid {
  display: grid;
  grid-template-columns: repeat(12, 11.550px);
  grid-auto-rows: 11.550px;
  height: 137px;
}

.grid i {
  border: 1px solid #2f2f2f;
}

.sw-group {
  height: 19px;
  display: flex;
  align-items: center;
  padding-left: 3px;
  font-size: 6.500px;
  color: #b8b8b8;
}

.gchev {
  width: 7px;
  height: 7px;
}

.gfold {
  width: 9px;
  height: 9px;
  margin: 0 5px 0 3px;
}

.sw-scroll {
  width: 10px;
  flex: none;
  display: flex;
  flex-direction: column;
  align-items: center;
  padding: 6px 0 3px;
  margin-right: 1px;
}

.sw-scroll .chev.up {
  transform: rotate(180deg);
}

.thumb-bar {
  width: 8px;
  height: 92px;
  background: #6b6b6b;
}

.sw-scroll > .chev:last-child {
  margin-top: auto;
}

.sw-foot {
  height: 17px;
  flex: none;
  display: flex;
  align-items: center;
  justify-content: flex-end;
  gap: 8px;
  padding-right: 17px;
}

.sw-foot svg {
  width: 10px;
  height: 10px;
}

.layers {
  flex: 1;
  min-height: 0;
  display: flex;
  flex-direction: column;
  background: #535353;
  position: relative;
}

.layers .ptabs {
  height: 17px;
}

.layers .ptab {
  line-height: 17px;
  padding: 0 5px;
  color: #ababab;
}

.layers .ptab.on {
  color: #e0e0e0;
}

.layers .ptab:nth-child(2) { padding-left: 5px; }
.layers .ptab:nth-child(3) { padding-left: 6px; }

.lrow {
  display: flex;
  align-items: center;
  font-size: 7px;
  color: #7a7a7a;
  padding-left: 3px;
  flex: none;
}

.filter { height: 22px; margin-top: 2px; }
.blend { height: 15px; margin-top: 0; }
.lockrow { height: 18px; }

.lfield {
  height: 13px;
  background: #4a4a4a;
  display: flex;
  align-items: center;
  padding: 0 1px 0 2px;
  flex: none;
}

.lfield .chev { margin-left: auto; opacity: .5; }

.kind { width: 55px; color: #8a8a8a; }

.small {
  width: 8px;
  height: 8px;
  margin-right: 2px;
}

.lic {
  width: 10px;
  height: 10px;
  flex: none;
  margin-left: 5px;
  opacity: .7;
}

.filter .lic { width: 10px; margin-left: 5px; }
.filter .lic:first-of-type { margin-left: 6px; }

.lic.t {
  width: 10px;
  font-family: 'Liberation Serif', serif;
  font-size: 11px;
  line-height: 10px;
  color: #ccc;
  text-align: center;
}

.lswitch {
  width: 5px;
  height: 8px;
  margin-left: 6px;
  border-radius: 3px;
  background: linear-gradient(#bbb 5px, #777 5px);
}

.normal { width: 80px; color: #7d7d7d; padding-left: 3px; }

.blend label { margin-left: 6px; width: 25px; color: #7d7d7d; }

.pct { width: 21px; height: 11px; background: #484848; color: #747474; }
.pdrop { width: 8px; height: 11px; margin-left: 2px; padding: 0; }

.locklbl { margin-left: 1px; width: 19px; color: #8a8a8a; }
.lockrow .lic { margin: 0 0 0 4px; width: 10px; }
.lockrow svg.lic + svg.lic { margin-left: 4px; }
.fill { margin-left: 17px; width: 14px; color: #7d7d7d; }

.layer-row {
  height: 28px;
  padding: 0;
  margin-top: 0;
}

.eye {
  width: 11px;
  height: 11px;
  margin: 0 5px 0 3px;
  flex: none;
}

.layer-item {
  width: 121px;
  height: 28px;
  background: #666;
  display: flex;
  align-items: center;
  padding-left: 3px;
  border-top: 1px solid #5b5b5b;
}

.layer-item .lname {
  margin-left: 5px;
  font-size: 6.500px;
  font-style: italic;
  color: #dadada;
}

.llock {
  width: 10px;
  height: 10px;
  margin-left: 37px;
}

.layer-foot {
  position: absolute;
  left: 0;
  right: 0;
  bottom: 0;
  height: 15px;
  display: flex;
  align-items: center;
  justify-content: flex-end;
  gap: 7.300px;
  padding-right: 17px;
  background: #535353;
  border-top: 1px solid #484848;
}

.layer-foot svg {
  width: 10px;
  height: 10px;
  flex: none;
}

.fx {
  width: 10px;
  font-family: 'Liberation Serif', serif;
  font-style: italic;
  font-size: 10px;
  color: #8f8f8f;
}

.purple-line {
  height: 1px;
  flex: none;
  background: #6b4fa0;
}
```
